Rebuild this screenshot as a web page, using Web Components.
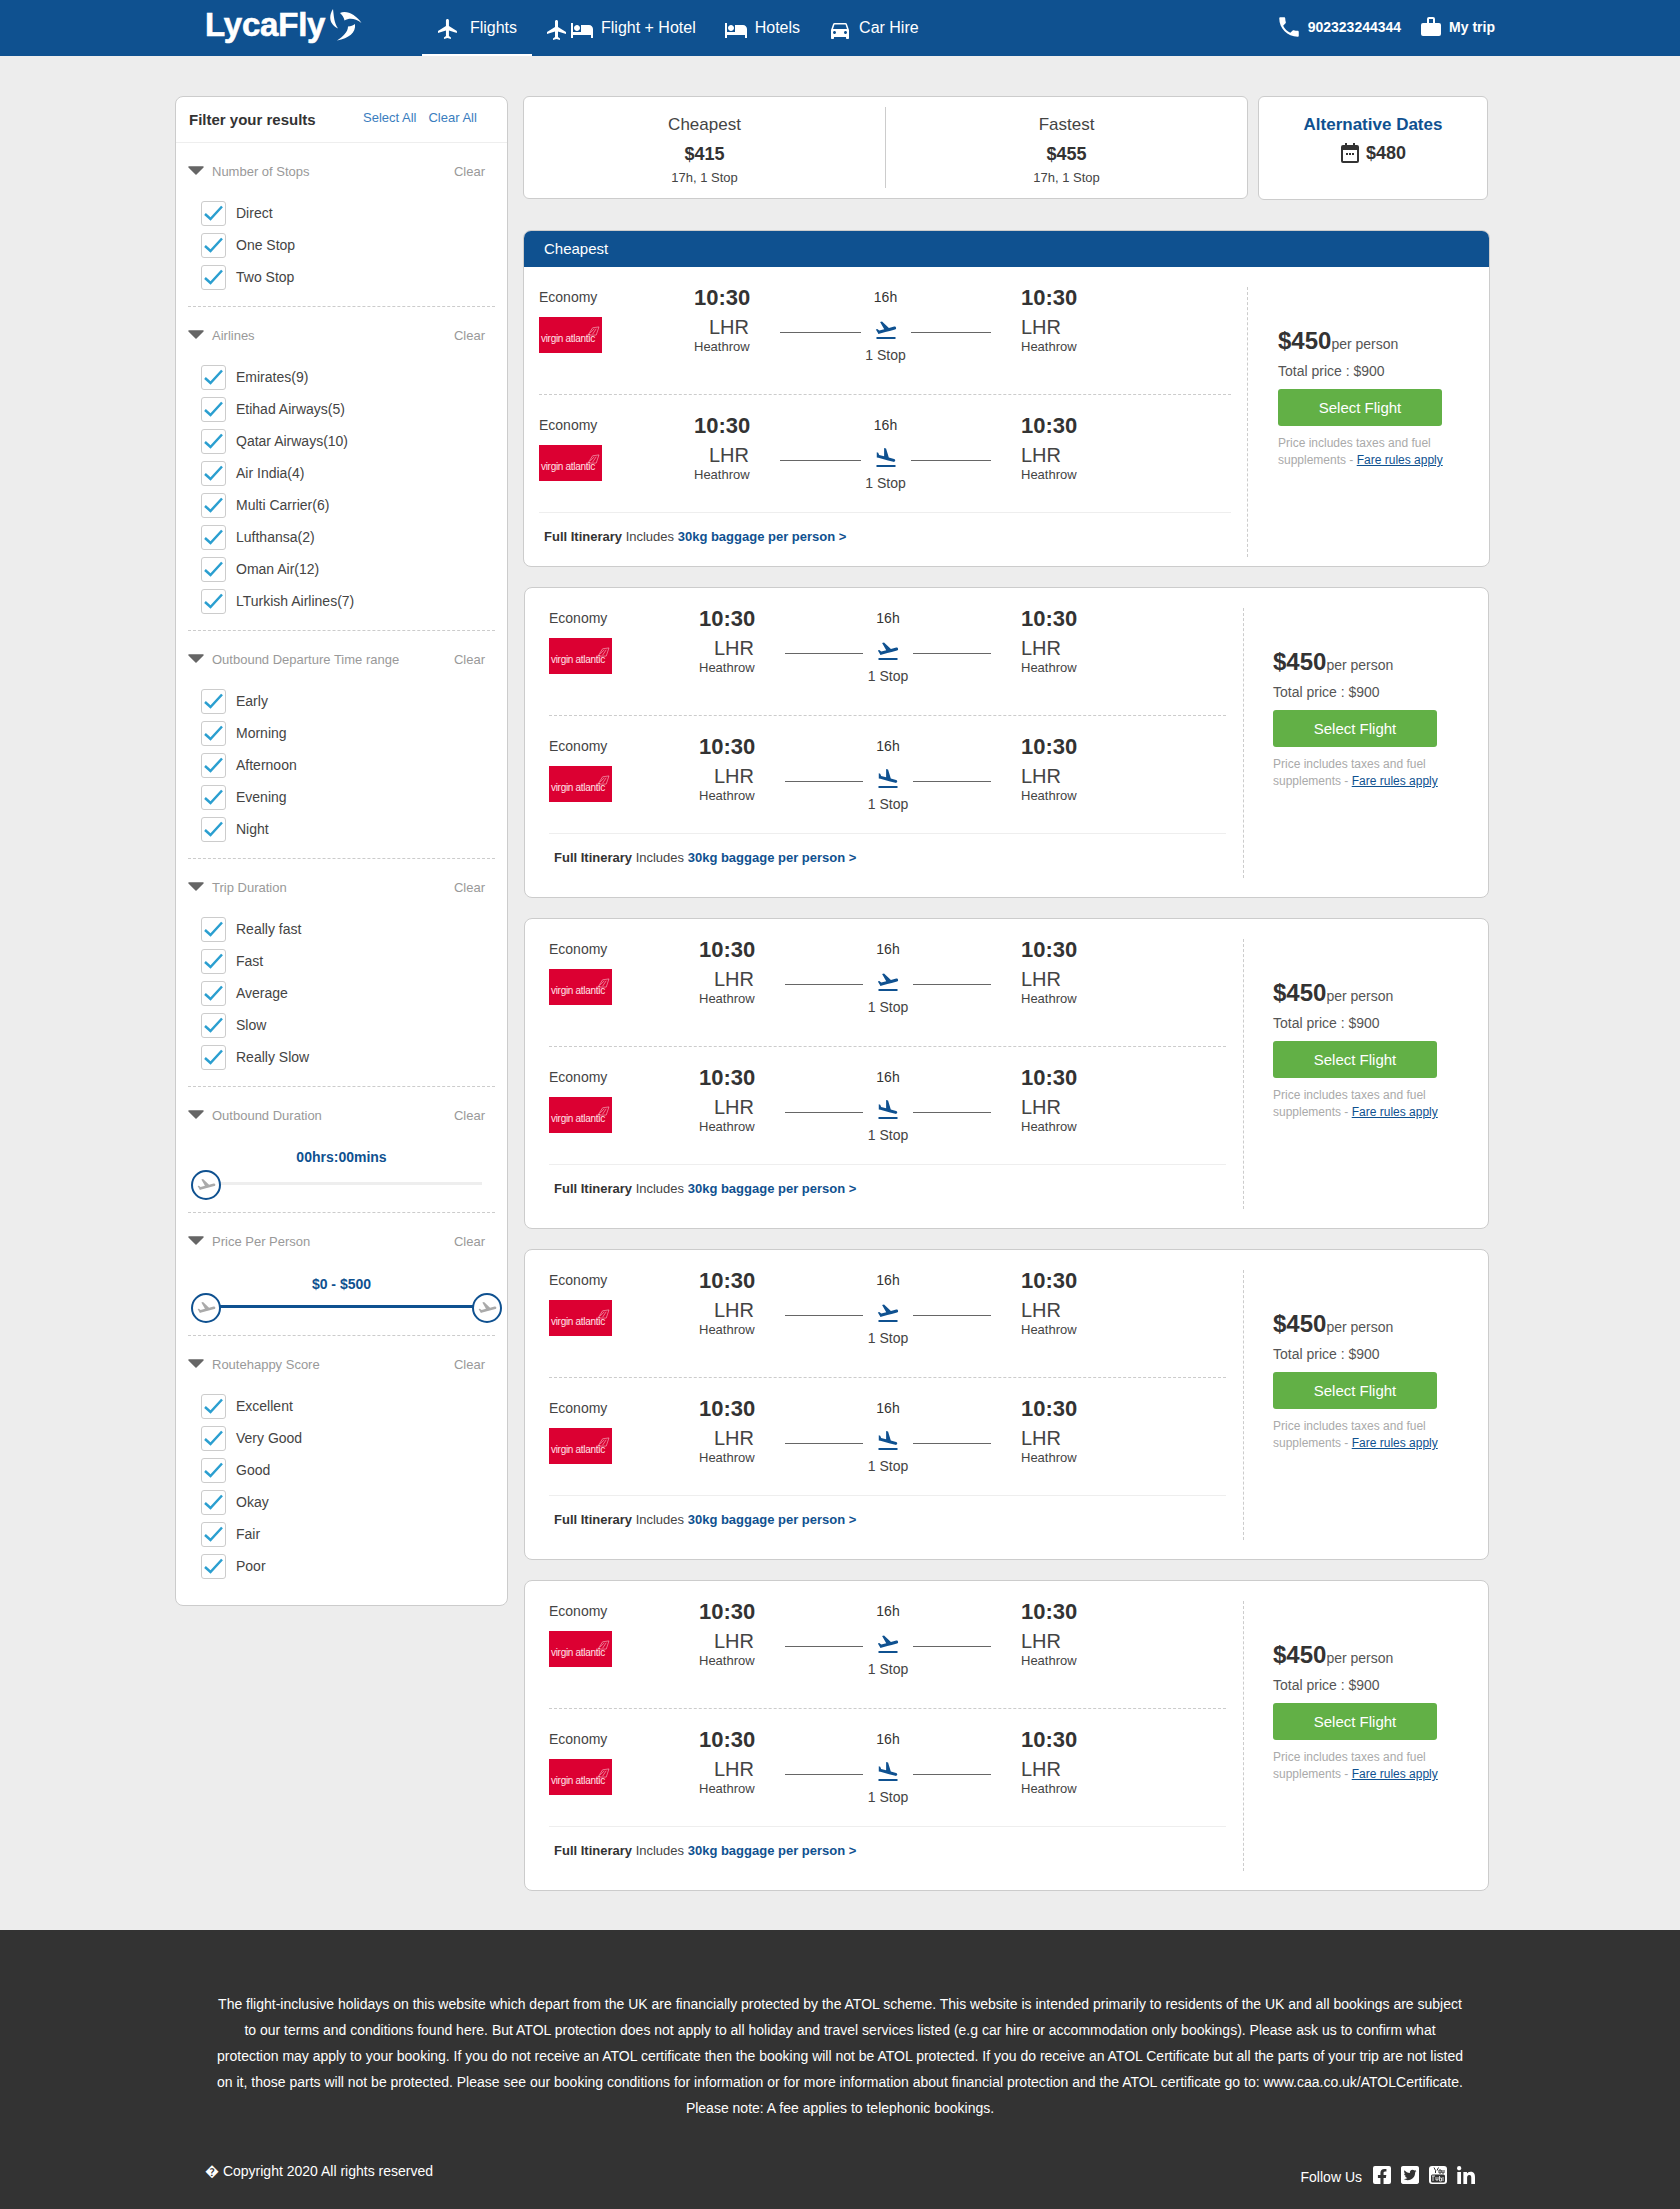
<!DOCTYPE html>
<html lang="en">
<head>
<meta charset="utf-8">
<title>LycaFly</title>
<style>
    html, body { margin: 0; padding: 0; }
    body { background: #ededed; color: #333; font-family: "Liberation Sans", Arial, sans-serif; }
</style>
</head>
<body>
<lf-header></lf-header>
<lf-layout>
    <filter-panel slot="side">
        <filter-section title="Number of Stops">
            <check-item>Direct</check-item><check-item>One Stop</check-item><check-item>Two Stop</check-item>
        </filter-section>
        <filter-section title="Airlines">
            <check-item>Emirates(9)</check-item><check-item>Etihad Airways(5)</check-item><check-item>Qatar Airways(10)</check-item><check-item>Air India(4)</check-item><check-item>Multi Carrier(6)</check-item><check-item>Lufthansa(2)</check-item><check-item>Oman Air(12)</check-item><check-item>LTurkish Airlines(7)</check-item>
        </filter-section>
        <filter-section title="Outbound Departure Time range">
            <check-item>Early</check-item><check-item>Morning</check-item><check-item>Afternoon</check-item><check-item>Evening</check-item><check-item>Night</check-item>
        </filter-section>
        <filter-section title="Trip Duration">
            <check-item>Really fast</check-item><check-item>Fast</check-item><check-item>Average</check-item><check-item>Slow</check-item><check-item>Really Slow</check-item>
        </filter-section>
        <filter-section title="Outbound Duration" kind="range">
            <range-filter label="00hrs:00mins"></range-filter>
        </filter-section>
        <filter-section title="Price Per Person" kind="range">
            <range-filter label="$0 - $500" both></range-filter>
        </filter-section>
        <filter-section title="Routehappy Score" last>
            <check-item>Excellent</check-item><check-item>Very Good</check-item><check-item>Good</check-item><check-item>Okay</check-item><check-item>Fair</check-item><check-item>Poor</check-item>
        </filter-section>
    </filter-panel>
    <summary-bar></summary-bar>
    <flight-card heading="Cheapest"></flight-card>
    <flight-card></flight-card>
    <flight-card></flight-card>
    <flight-card></flight-card>
    <flight-card></flight-card>
</lf-layout>
<lf-footer></lf-footer>

<script>
// 图标 (inline svg)
const P = {
    plane: 'M21 16v-2l-8-5V3.5c0-.83-.67-1.5-1.5-1.5S10 2.67 10 3.5V9l-8 5v2l8-2.5V19l-2 1.5V22l3.5-1 3.5 1v-1.5L13 19v-5.5l8 2.5z',
    hotel: 'M7 13c1.66 0 3-1.34 3-3S8.66 7 7 7s-3 1.34-3 3 1.34 3 3 3zm12-6h-8v7H3V5H1v15h2v-3h18v3h2v-9c0-2.21-1.79-4-4-4z',
    car: 'M18.92 6.01C18.72 5.42 18.16 5 17.5 5h-11c-.66 0-1.21.42-1.42 1.01L3 12v8c0 .55.45 1 1 1h1c.55 0 1-.45 1-1v-1h12v1c0 .55.45 1 1 1h1c.55 0 1-.45 1-1v-8l-2.08-5.99zM6.5 16c-.83 0-1.5-.67-1.5-1.5S5.67 13 6.5 13s1.5.67 1.5 1.5S7.33 16 6.5 16zm11 0c-.83 0-1.5-.67-1.5-1.5s.67-1.5 1.5-1.5 1.5.67 1.5 1.5-.67 1.5-1.5 1.5zM5 11l1.5-4.5h11L19 11H5z',
    phone: 'M6.62 10.79c1.44 2.83 3.76 5.14 6.59 6.59l2.2-2.2c.27-.27.67-.36 1.02-.24 1.12.37 2.33.57 3.57.57.55 0 1 .45 1 1V20c0 .55-.45 1-1 1-9.39 0-17-7.61-17-17 0-.55.45-1 1-1h3.5c.55 0 1 .45 1 1 0 1.25.2 2.45.57 3.57.11.35.03.74-.25 1.02l-2.2 2.2z',
    takeoff: 'M2.5 19h19v2h-19zm19.57-9.36c-.21-.8-1.04-1.28-1.84-1.06L14.92 10l-6.9-6.43-1.93.51 4.14 7.17-4.97 1.33-1.97-1.54-1.45.39 1.82 3.16.77 1.33 1.6-.43 5.31-1.42 4.35-1.16L21 11.49c.81-.23 1.28-1.05 1.07-1.85z',
    land: 'M2.5 19h19v2h-19zm7.18-5.73l4.35 1.16 5.31 1.42c.8.21 1.62-.26 1.84-1.06.21-.8-.26-1.62-1.06-1.84l-5.31-1.42-2.76-9.02L10.12 2v8.28L5.15 8.95l-.93-2.32-1.45-.39v5.17l1.6.43 5.31 1.43z',
    slide: 'M22.07 9.64c-.21-.8-1.04-1.28-1.84-1.06L14.92 10l-6.9-6.43-1.93.51 4.14 7.17-4.97 1.33-1.97-1.54-1.45.39 1.82 3.16.77 1.33 1.6-.43 5.31-1.42 4.35-1.16L21 11.49c.81-.23 1.28-1.05 1.07-1.85z'
};
const icon = (name, size = 24, fill = '#fff') =>
    `<svg width="${size}" height="${size}" viewBox="0 0 24 24" fill="${fill}"><path d="${P[name]}"/></svg>`;

class LfHeader extends HTMLElement {
    connectedCallback() {
        this.attachShadow({ mode: 'open' }).innerHTML = `
            <style>
                :host { display: flex; height: 56px; background: #0f5190; color: #fff; padding-left: 205px; align-items: stretch; }
                .logo { width: 154px; margin-right: 63px; display: flex; align-items: center; font-weight: bold; font-size: 33px; letter-spacing: -.2px; -webkit-text-stroke: .6px #fff; height: 50px; }
                .logo svg { position: relative; left: 5px; flex: none; }
                nav { display: flex; }
                a { display: flex; align-items: center; gap: 7px; font-size: 16px; padding: 0 14px; box-sizing: border-box; height: 56px; }
                a svg { margin-top: 4px; }
                a .pair { display: flex; gap: 1px; }
                a.on { border-bottom: 2px solid #fff; gap: 10px; padding: 2px 15px 0 14px; width: 110px; }
                a.on svg { margin-top: 2px; }
                a.second { padding-left: 13px; }
                .right { margin-left: auto; padding: 0 185px 3px 0; display: flex; align-items: center; font-weight: bold; font-size: 14px; }
                .right svg { flex: none; display: block; }
                .bag { margin: 0 8px 0 20px; }
                .ph { margin-right: 6px; }
            </style>
            <div class="logo">LycaFly
                <svg width="32" height="32" viewBox="0 0 32 32" fill="#fff">
                    <path d="M3 0C-1.5 7-1 15 8 19.500C4 13.500 4 8 3 0z"/>
                    <path d="M10 4C17 1 26 6 31.500 14C25 9 19 9 14.500 11.500C14 8 12 6 10 4z"/>
                    <path d="M25 15C26 24 19 29 7 31.500C13 27.500 18 23 18 17.500C21 17.500 23 16.500 25 15z"/>
                </svg>
            </div>
            <nav>
                <a class="on">${icon('plane')}Flights</a>
                <a class="second"><span class="pair">${icon('plane')}${icon('hotel')}</span>Flight + Hotel</a>
                <a>${icon('hotel')}Hotels</a>
                <a>${icon('car')}Car Hire</a>
            </nav>
            <div class="right">
                <span class="ph">${icon('phone', 26)}</span><span>902323244344</span>
                <svg class="bag" width="20" height="19" viewBox="0 0 20 19" fill="#fff">
                    <path d="M6 6V2a2 2 0 0 1 2-2h4a2 2 0 0 1 2 2v4h4a2 2 0 0 1 2 2v9a2 2 0 0 1-2 2H2a2 2 0 0 1-2-2V8a2 2 0 0 1 2-2zm2 0h4V2H8z"/>
                </svg>
                <span>My trip</span>
            </div>`;
    }
}

class LfLayout extends HTMLElement {
    connectedCallback() {
        this.attachShadow({ mode: 'open' }).innerHTML = `
            <style>
                :host { display: flex; align-items: flex-start; gap: 15px; padding: 40px 0 39px 175px; }
                .main { width: 967px; display: flex; flex-direction: column; align-items: center; gap: 20px; }
            </style>
            <slot name="side"></slot>
            <div class="main"><slot></slot></div>`;
    }
}

class FilterPanel extends HTMLElement {
    connectedCallback() {
        this.attachShadow({ mode: 'open' }).innerHTML = `
            <style>
                :host { display: block; width: 333px; box-sizing: border-box; background: #fff; border: 1px solid #ccc; border-radius: 8px; }
                .top { display: flex; align-items: center; height: 45px; border-bottom: 1px solid #eee; padding: 0 0 0 13px; }
                b { font-size: 15px; color: #333; width: 174px; line-height: 45px; white-space: nowrap; }
                a { font-size: 13px; color: #3a7dbe; margin-right: 12px; margin-top: -4px; }
                .body { padding: 0 12px; }
            </style>
            <div class="top"><b>Filter your results</b><a>Select All</a><a>Clear All</a></div>
            <div class="body"><slot></slot></div>`;
    }
}

class FilterSection extends HTMLElement {
    connectedCallback() {
        this.attachShadow({ mode: 'open' }).innerHTML = `
            <style>
                :host { display: block; padding-top: 20px; padding-bottom: 16px; border-bottom: 1px dashed #ccc; font-size: 13px; }
                :host([last]) { border-bottom: 0; padding-bottom: 26px; }
                :host([kind="range"]) { padding-bottom: 12px; }
                .head { display: flex; align-items: center; height: 18px; color: #999; line-height: 18px; padding-right: 10px; }
                .head svg { margin-right: 8px; margin-top: -3px; flex: none; }
                .head span { flex: 1; }
                .list { margin: 20px 0 0 13px; display: flex; flex-direction: column; gap: 7px; }
                :host([kind="range"]) .list { margin: 0; }
            </style>
            <div class="head">
                <svg width="16" height="9" viewBox="0 0 16 9"><path d="M1 1h14L8 8z" fill="#666" stroke="#666" stroke-width="1.500" stroke-linejoin="round"/></svg>
                <span>${this.getAttribute('title')}</span>Clear
            </div>
            <div class="list"><slot></slot></div>`;
        this.removeAttribute('title');
    }
}

class CheckItem extends HTMLElement {
    connectedCallback() {
        this.attachShadow({ mode: 'open' }).innerHTML = `
            <style>
                :host { display: flex; align-items: center; gap: 10px; height: 25px; font-size: 14px; color: #444; }
                .box { width: 25px; height: 25px; box-sizing: border-box; border: 1px solid #ccc; border-radius: 3px; flex: none; }
                .txt { margin-top: -1px; }
                svg { display: block; }
            </style>
            <div class="box"><svg width="23" height="23" viewBox="0 0 23 23"><path d="M3 12l5.500 5L20 4.500" fill="none" stroke="#2b9fd0" stroke-width="2.500"/></svg></div>
            <div class="txt"><slot></slot></div>`;
    }
}

class RangeFilter extends HTMLElement {
    connectedCallback() {
        const both = this.hasAttribute('both');
        this.attachShadow({ mode: 'open' }).innerHTML = `
            <style>
                :host { display: block; }
                .label { text-align: center; font-weight: bold; font-size: 14px; line-height: 16px; color: #0f5190; margin-top: ${both ? 25 : 24}px; }
                .slider { position: relative; height: 30px; margin-top: ${both ? 1 : 5}px; }
                .track { position: absolute; left: 18px; top: 12px; height: 3px; width: ${both ? 270 : 276}px; background: ${both ? '#0f5190' : '#eee'}; }
                .h { position: absolute; top: 0; box-sizing: border-box; width: 30px; height: 30px; border: 2.500px solid #0f5190; border-radius: 50%; background: #fff; display: flex; align-items: center; justify-content: center; }
                .h svg { margin-top: 2px; }
            </style>
            <div class="label">${this.getAttribute('label')}</div>
            <div class="slider">
                <div class="track"></div>
                <div class="h" style="left:3px">${icon('slide', 21, '#aaa')}</div>
                ${both ? `<div class="h" style="left:284px">${icon('slide', 21, '#aaa')}</div>` : ''}
            </div>`;
    }
}

class SummaryBar extends HTMLElement {
    connectedCallback() {
        this.attachShadow({ mode: 'open' }).innerHTML = `
            <style>
                :host { display: flex; align-items: flex-start; gap: 10px; width: 967px; margin-bottom: 10px; text-align: center; }
                .card { background: #fff; border: 1px solid #ccc; border-radius: 6px; box-sizing: border-box; }
                .sum { width: 725px; height: 103px; padding: 10px 0; display: flex; }
                .it { flex: 1; padding-top: 8px; height: 81px; box-sizing: border-box; }
                .it + .it { border-left: 1px solid #ccc; }
                .t { font-size: 17px; line-height: 20px; color: #444; }
                .p { font-size: 18px; line-height: 20px; font-weight: bold; margin-top: 9px; }
                .s { font-size: 13px; line-height: 16px; margin-top: 6px; color: #444; }
                .alt { width: 230px; height: 104px; padding-top: 18px; }
                .alt .t { font-weight: bold; color: #0f5190; }
                .row { display: flex; justify-content: center; align-items: center; gap: 7px; font-size: 18px; line-height: 20px; font-weight: bold; margin-top: 8px; margin-left: 1px; }
            </style>
            <div class="card sum">
                <div class="it"><div class="t">Cheapest</div><div class="p">$415</div><div class="s">17h, 1 Stop</div></div>
                <div class="it"><div class="t">Fastest</div><div class="p">$455</div><div class="s">17h, 1 Stop</div></div>
            </div>
            <div class="card alt">
                <div class="t">Alternative Dates</div>
                <div class="row">
                    <svg width="18" height="20" viewBox="0 0 18 20" fill="#333"><path d="M4 0h2v2h6V0h2v2h2a2 2 0 0 1 2 2v14a2 2 0 0 1-2 2H2a2 2 0 0 1-2-2V4a2 2 0 0 1 2-2h2zM2 7v11h14V7z"/><path d="M5 10h2v2H5zm3 0h2v2H8zm3 0h2v2h-2z"/></svg>
                    $480
                </div>
            </div>`;
    }
}

class AirlineLogo extends HTMLElement {
    connectedCallback() {
        this.attachShadow({ mode: 'open' }).innerHTML = `
            <style>
                :host { display: flex; align-items: center; position: relative; width: 63px; height: 36px; background: #dc0032; color: #ffe3e8; font-size: 10px; letter-spacing: -.3px; padding-left: 2px; box-sizing: border-box; }
                span { margin-top: 6px; white-space: nowrap; }
                svg { position: absolute; right: 2px; top: 9px; }
            </style>
            <span>virgin atlantic</span>
            <svg width="13" height="10" viewBox="0 0 14 11" fill="none" stroke="#fff" stroke-width=".5"><path d="M1 10l5-8 7-1-3 9zM3 8l5-5M6 9l4-6"/></svg>`;
    }
}

class FlightLeg extends HTMLElement {
    connectedCallback() {
        const plane = this.getAttribute('plane');
        this.attachShadow({ mode: 'open' }).innerHTML = `
            <style>
                :host { display: grid; grid-template-columns: var(--lead) 55px var(--mid) 55px; column-gap: 0; padding-top: 21px; padding-bottom: 30px; border-bottom: 1px dashed #ccc; }
                :host([last]) { padding-bottom: 20px; border-bottom: 0; }
                .cls { font-size: 14px; line-height: 18px; color: #444; }
                airline-logo { margin-top: 11px; }
                .time { font-size: 22px; line-height: 20px; font-weight: bold; }
                .code { font-size: 20px; line-height: 24px; margin-top: 7px; color: #444; }
                .air { font-size: 13px; line-height: 16px; color: #444; white-space: nowrap; }
                .dep { text-align: right; }
                .mid { margin: 0 30px 0 31px; text-align: center; }
                .dur { font-size: 14px; line-height: 18px; }
                .path { display: flex; align-items: flex-start; margin-top: 12px; }
                .path i { flex: 1; height: 1px; background: #666; margin-top: 14px; }
                .path svg { margin: 0 13px; flex: none; }
                .stop { font-size: 14px; line-height: 18px; margin-top: 4px; color: #444; }
            </style>
            <div><div class="cls">Economy</div><airline-logo></airline-logo></div>
            <div class="dep"><div class="time">10:30</div><div class="code">LHR</div><div class="air">Heathrow</div></div>
            <div class="mid">
                <div class="dur">16h</div>
                <div class="path"><i></i>${icon(plane, 24, '#0f5190')}<i></i></div>
                <div class="stop">1 Stop</div>
            </div>
            <div><div class="time">10:30</div><div class="code">LHR</div><div class="air">Heathrow</div></div>`;
    }
}

class FlightCard extends HTMLElement {
    connectedCallback() {
        const heading = this.getAttribute('heading');
        this.attachShadow({ mode: 'open' }).innerHTML = `
            <style>
                :host { display: block; width: 965px; box-sizing: border-box; background: #fff; border: 1px solid #ccc; border-radius: 8px; overflow: hidden; }
                :host([heading]) { width: 967px; }
                .hd { background: #0f5190; color: #fff; font-size: 15px; height: 36px; line-height: 35px; padding-left: 20px; margin-top: -1px; border-top: 1px solid #0f5190; }
                .body { display: flex; align-items: stretch; --lead: 150px; --mid: 267px; }
                .legs { width: 677px; margin: 0 17px 0 24px; }
                .it { border-top: 1px solid #eee; padding: 16px 0 31px 5px; font-size: 13px; line-height: 16px; color: #444; }
                .it b { color: #333; }
                .it .l { color: #0f5190; font-weight: bold; }
                .price { width: 210px; border-left: 1px dashed #ccc; margin: 20px 0 19px; padding: 40px 0 0 29px; white-space: nowrap; }
                :host([heading]) .body { --lead: 155px; --mid: 272px; }
                :host([heading]) .legs { width: 692px; margin: 0 16px 0 15px; }
                :host([heading]) .it { padding-bottom: 21px; }
                :host([heading]) .price { margin-bottom: 9px; padding-left: 30px; }
                .amt { font-size: 14px; height: 27px; line-height: 27px; color: #555; }
                .amt b { font-size: 24px; color: #333; }
                .tot { font-size: 14px; line-height: 18px; margin-top: 8px; color: #555; }
                .btn { width: 164px; height: 37px; line-height: 37px; margin-top: 9px; text-align: center; background: #62b046; color: #fff; font-size: 15px; border-radius: 3px; }
                .fine { font-size: 12px; line-height: 17px; margin-top: 9px; color: #aaa; }
                .fine a { color: #0f5190; text-decoration: underline; }
            </style>
            ${heading ? `<div class="hd">${heading}</div>` : ''}
            <div class="body">
                <div class="legs">
                    <flight-leg plane="takeoff"></flight-leg>
                    <flight-leg plane="land" last></flight-leg>
                    <div class="it"><b>Full Itinerary</b> Includes <span class="l">30kg baggage per person &gt;</span></div>
                </div>
                <div class="price">
                    <div class="amt"><b>$450</b>per person</div>
                    <div class="tot">Total price : $900</div>
                    <div class="btn">Select Flight</div>
                    <div class="fine">Price includes taxes and fuel<br>supplements - <a>Fare rules apply</a></div>
                </div>
            </div>`;
    }
}

class LfFooter extends HTMLElement {
    connectedCallback() {
        this.attachShadow({ mode: 'open' }).innerHTML = `
            <style>
                :host { display: block; background: #333; color: #fff; padding: 61px 205px 25px; }
                p { margin: 0 -20px; text-align: center; font-size: 14px; line-height: 26px; white-space: nowrap; }
                .bar { display: flex; justify-content: space-between; align-items: flex-start; margin-top: 41px; font-size: 14px; line-height: 18px; }
                .follow { display: flex; align-items: flex-start; margin-top: 4px; }
                .follow span { margin: 2px 11px 0 0; }
                .follow svg { display: block; margin-left: 10px; }
                .follow svg:first-of-type { margin-left: 0; }
            </style>
            <p>The flight-inclusive holidays on this website which depart from the UK are financially protected by the ATOL scheme. This website is intended primarily to residents of the UK and all bookings are subject<br>
            to our terms and conditions found here. But ATOL protection does not apply to all holiday and travel services listed (e.g car hire or accommodation only bookings). Please ask us to confirm what<br>
            protection may apply to your booking. If you do not receive an ATOL certificate then the booking will not be ATOL protected. If you do receive an ATOL Certificate but all the parts of your trip are not listed<br>
            on it, those parts will not be protected. Please see our booking conditions for information or for more information about financial protection and the ATOL certificate go to: www.caa.co.uk/ATOLCertificate.<br>
            Please note: A fee applies to telephonic bookings.</p>
            <div class="bar">
                <div>&#xFFFD; Copyright 2020 All rights reserved</div>
                <div class="follow">
                    <span>Follow Us</span>
                    <svg width="18" height="18" viewBox="0 32 448 448" fill="#fff"><path d="M400 32H48A48 48 0 0 0 0 80v352a48 48 0 0 0 48 48h137.250V327.690h-63V256h63v-54.640c0-62.150 37-96.480 93.670-96.480 27.140 0 55.520 4.840 55.520 4.840v61h-31.270c-30.810 0-40.420 19.120-40.420 38.730V256h68.780l-11 71.690h-57.780V480H400a48 48 0 0 0 48-48V80a48 48 0 0 0-48-48z"/></svg>
                    <svg width="18" height="18" viewBox="0 32 448 448" fill="#fff"><path d="M400 32H48C21.500 32 0 53.500 0 80v352c0 26.500 21.500 48 48 48h352c26.500 0 48-21.500 48-48V80c0-26.500-21.500-48-48-48zm-48.900 158.800c.2 2.800.2 5.700.2 8.500 0 86.700-66 186.600-186.600 186.600-37.200 0-71.700-10.800-100.700-29.400 5.300.6 10.400.8 15.800.8 30.700 0 58.900-10.400 81.400-28-28.800-.6-53-19.500-61.300-45.500 10.100 1.500 19.200 1.500 29.600-1.200-30-6.100-52.500-32.500-52.500-64.400v-.8c8.700 4.900 18.900 7.900 29.600 8.300a65.447 65.447 0 0 1-29.200-54.600c0-12.200 3.200-23.400 8.900-33.100 32.300 39.800 80.800 65.800 135.200 68.600-9.300-44.500 24-80.600 64-80.600 18.900 0 35.900 7.900 47.900 20.700 14.800-2.800 29-7.200 41.600-14.800-4.900 15.200-15.200 28-28.800 36.100 13.200-1.400 26-5.100 37.800-10.200-8.900 13.100-20.100 24.700-32.900 34z"/></svg>
                    <svg width="18" height="18" viewBox="0 0 18 18"><rect width="18" height="18" rx="3" fill="#fff"/><rect x="2" y="8.500" width="14" height="8" rx="1.500" fill="#333"/><path d="M5 1.500l1.500 3v2.500M9.500 1.500l-1.500 3M10 4h2v3h-2zM13 4v3h2V4" fill="none" stroke="#333"/><path d="M4 10v5M3 10h3M7 11v3h2v-3M10.500 10v5h2v-3h-2M14 11v4" fill="none" stroke="#fff" stroke-width=".8"/></svg>
                    <svg width="18" height="18" viewBox="0 0 448 448" fill="#fff"><path d="M100.280 448H7.400V148.900h92.880zM53.790 108.100C24.090 108.100 0 83.500 0 53.800a53.790 53.790 0 0 1 107.580 0c0 29.700-24.100 54.300-53.790 54.300zM447.900 448h-92.680V302.400c0-34.700-.7-79.200-48.290-79.200-48.290 0-55.690 37.700-55.690 76.700V448h-92.780V148.900h89.080v40.800h1.300c12.400-23.500 42.690-48.300 87.880-48.300 94 0 111.280 61.900 111.280 142.300V448z"/></svg>
                </div>
            </div>`;
    }
}

customElements.define('lf-header', LfHeader);
customElements.define('lf-layout', LfLayout);
customElements.define('filter-panel', FilterPanel);
customElements.define('filter-section', FilterSection);
customElements.define('check-item', CheckItem);
customElements.define('range-filter', RangeFilter);
customElements.define('summary-bar', SummaryBar);
customElements.define('airline-logo', AirlineLogo);
customElements.define('flight-leg', FlightLeg);
customElements.define('flight-card', FlightCard);
customElements.define('lf-footer', LfFooter);
</script>
</body>
</html>
